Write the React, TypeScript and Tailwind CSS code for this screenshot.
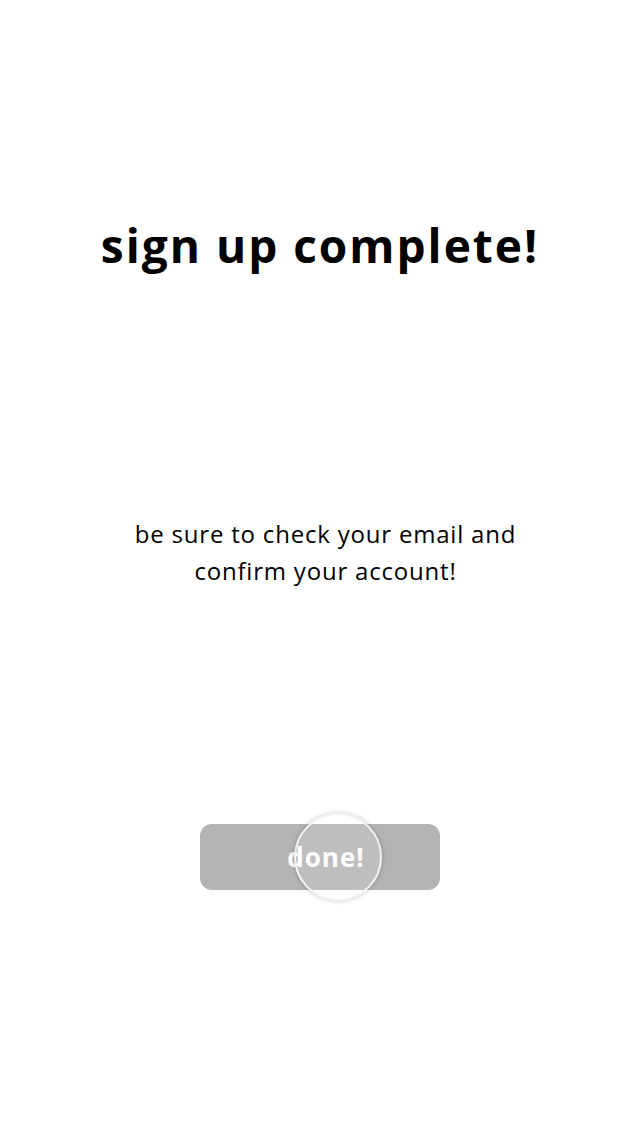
export default function App() {
  return (
    <div
      className="flex min-h-[1136px] w-full flex-col items-center bg-white text-black"
      style={{ fontFamily: '"Open Sans", "Liberation Sans", sans-serif' }}
    >
      <h1 className="mt-[220px] text-[46px] font-bold leading-[50px] tracking-[2px]">
        sign up complete!
      </h1>

      <p className="ml-[11px] mt-[245px] text-center text-[24px] leading-[37px] tracking-[0.8px]">
        be sure to check your email and
        <br />
        confirm your account!
      </p>

      <div className="relative mt-[235px]">
        <button className="flex h-[66px] w-[240px] items-center justify-center rounded-[12px] bg-[#b3b3b3] text-[26px] font-bold tracking-[1px] text-white">
          <span className="ml-[12px]">done!</span>
        </button>
        {/* touch indicator */}
        <div className="pointer-events-none absolute left-[94px] top-[-11px] h-[88px] w-[88px] rounded-full border-2 border-[#f2f2f2] bg-white/15 shadow-[0_0_4px_rgba(0,0,0,0.25)]" />
      </div>
    </div>
  );
}
